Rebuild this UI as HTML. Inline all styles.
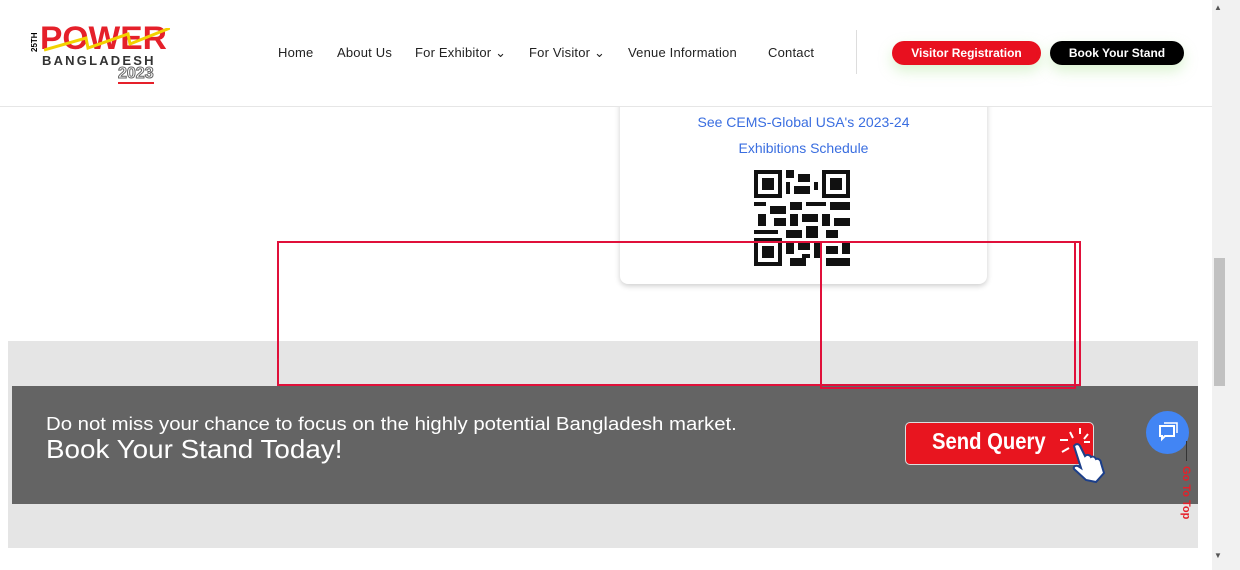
<!DOCTYPE html>
<html><head><style>
body{margin:0;width:1240px;height:570px;overflow:hidden;background:#fff;font-family:"Liberation Sans",sans-serif;position:relative}
.a{position:absolute}
.nav{top:45px;font-size:13px;color:#222;letter-spacing:.2px}
</style></head><body>
<div class="a" style="left:0;top:0;width:1212px;height:106px;background:#fff;border-bottom:1px solid #e6e6e6"></div>
<div class="a" style="left:30px;top:22px;width:140px;height:62px">
<div class="a" style="left:0;top:30px;font-size:8px;font-weight:bold;transform:rotate(-90deg);transform-origin:left top">25TH</div>
<div class="a" style="left:10px;top:-2px;font-size:32px;font-weight:900;color:#e5202a;letter-spacing:0px;transform:scaleX(1.05);transform-origin:left">POWER</div>
<svg class="a" style="left:14px;top:6px" width="126" height="26"><polyline points="0,22 42,10 44,20 84,6 86,16 126,0" fill="none" stroke="#f2d200" stroke-width="3"/></svg>
<div class="a" style="left:12px;top:31px;font-size:13px;font-weight:bold;color:#333;letter-spacing:2.2px">BANGLADESH</div>
<div class="a" style="left:88px;top:44px;font-size:16px;font-weight:bold;color:#fff;-webkit-text-stroke:1px #666;border-bottom:2px solid #e5202a;line-height:16px">2023</div>
</div>
<div class="a nav" style="left:278px">Home</div>
<div class="a nav" style="left:337px">About Us</div>
<div class="a nav" style="left:415px">For Exhibitor ⌄</div>
<div class="a nav" style="left:529px">For Visitor ⌄</div>
<div class="a nav" style="left:628px">Venue Information</div>
<div class="a nav" style="left:768px">Contact</div>
<div class="a" style="left:856px;top:30px;width:1px;height:44px;background:#ddd"></div>
<div class="a" style="left:892px;top:41px;width:149px;height:24px;border-radius:12px;background:#e8101f;color:#fff;font-size:12px;font-weight:bold;text-align:center;line-height:24px;box-shadow:0 6px 14px rgba(150,220,120,.35)">Visitor Registration</div>
<div class="a" style="left:1050px;top:41px;width:134px;height:24px;border-radius:12px;background:#000;color:#fff;font-size:12px;font-weight:bold;text-align:center;line-height:24px;box-shadow:0 6px 14px rgba(150,220,120,.35)">Book Your Stand</div>
<div class="a" style="left:620px;top:95px;width:367px;height:189px;background:#fff;border-radius:0 0 8px 8px;box-shadow:0 2px 6px rgba(0,0,0,.2);z-index:-1"></div>
<div class="a" style="left:620px;top:109px;width:367px;text-align:center;color:#3a6ee0;font-size:14px;line-height:26px">See CEMS-Global USA's 2023-24<br>Exhibitions Schedule</div>
<svg class="a" style="left:754px;top:170px" width="96" height="96" viewBox="0 0 24 24" shape-rendering="crispEdges">
<rect width="24" height="24" fill="#fff"/>
<g fill="#111"><path d="M0 0h7v7H0zM17 0h7v7h-7zM0 17h7v7H0z"/></g>
<g fill="#fff"><path d="M1 1h5v5H1zM18 1h5v5h-5zM1 18h5v5H1z"/></g>
<g fill="#111"><path d="M2 2h3v3H2zM19 2h3v3h-3zM2 19h3v3H2z"/>
<path d="M8 0h2v2H8zM11 1h3v2h-3zM8 3h1v3H8zM10 4h4v2h-4zM15 3h1v2h-1zM0 8h3v1H0zM4 9h4v2H4zM9 8h3v2H9zM13 8h5v1h-5zM19 8h5v2h-5zM1 11h2v3H1zM5 12h3v2H5zM9 11h2v3H9zM12 11h4v2h-4zM17 11h2v3h-2zM20 12h4v2h-4zM0 15h6v1H0zM8 15h4v2H8zM13 14h3v3h-3zM18 15h3v2h-3zM8 18h2v3H8zM11 18h3v2h-3zM15 18h2v4h-2zM18 19h3v2h-3zM22 18h2v3h-2zM9 22h4v2H9zM12 21h2v1h-2zM18 22h6v2h-6z"/></g></svg>
<div class="a" style="left:8px;top:341px;width:1190px;height:207px;background:#e5e5e5;z-index:-2"></div>
<div class="a" style="left:12px;top:386px;width:1186px;height:118px;background:#646464"></div>
<div class="a" style="left:46px;top:414px;color:#fff;font-size:18px;transform:scaleX(1.13);transform-origin:left;white-space:nowrap">Do not miss your chance to focus on the highly potential Bangladesh market.</div>
<div class="a" style="left:46px;top:434px;color:#fff;font-size:26px;transform:scaleX(1.07);transform-origin:left;white-space:nowrap">Book Your Stand Today!</div>
<div class="a" style="left:905px;top:422px;width:187px;height:41px;background:#e8151f;border:1px solid #ddd;border-radius:5px"></div>
<div class="a" style="left:932px;top:428px;color:#fff;font-size:23px;font-weight:bold;transform:scaleX(.88);transform-origin:left">Send Query</div>
<svg class="a" style="left:1056px;top:428px" width="60" height="56"><g stroke="#fff" stroke-width="2"><path d="M4 12h8M6 24l7-4M14 4l3 6M24 0v6M32 6l-4 5M34 14h-6"/></g>
<path d="M18 18c2-3 5-2 6 0l5 10c2-2 5-1 6 1 2-1 4 0 5 2 2-1 5 1 5 4l3 10-8 9-10-2-12-11c-1-2 1-4 4-3l3 2z" fill="#fff" stroke="#1c3f8a" stroke-width="2"/></svg>
<div class="a" style="left:1146px;top:411px;width:43px;height:43px;border-radius:50%;background:#4285f4"></div>
<svg class="a" style="left:1156px;top:421px" width="24" height="24"><path d="M4 5h14v10H9l-3 3v-3H4z" fill="none" stroke="#fff" stroke-width="2"/><path d="M8 2h13v10" fill="none" stroke="#fff" stroke-width="1.5"/></svg>
<div class="a" style="left:1186px;top:441px;width:1px;height:20px;background:#333"></div>
<div class="a" style="left:1180px;top:466px;color:#e5202a;font-size:11px;font-weight:bold;writing-mode:vertical-rl;white-space:nowrap;line-height:12px">Go To Top</div>
<div class="a" style="left:277px;top:241px;width:800px;height:141px;border:2px solid #e0103a"></div>
<div class="a" style="left:820px;top:241px;width:252px;height:144px;border:2px solid #e0103a"></div>
<div class="a" style="left:1212px;top:0;width:28px;height:570px;background:#f1f1f1"></div>
<div class="a" style="left:1214px;top:258px;width:11px;height:128px;background:#c1c1c1"></div>
<div class="a" style="left:1214px;top:3px;font-size:8px;color:#555">▲</div>
<div class="a" style="left:1214px;top:551px;font-size:8px;color:#555">▼</div>
</body></html>
